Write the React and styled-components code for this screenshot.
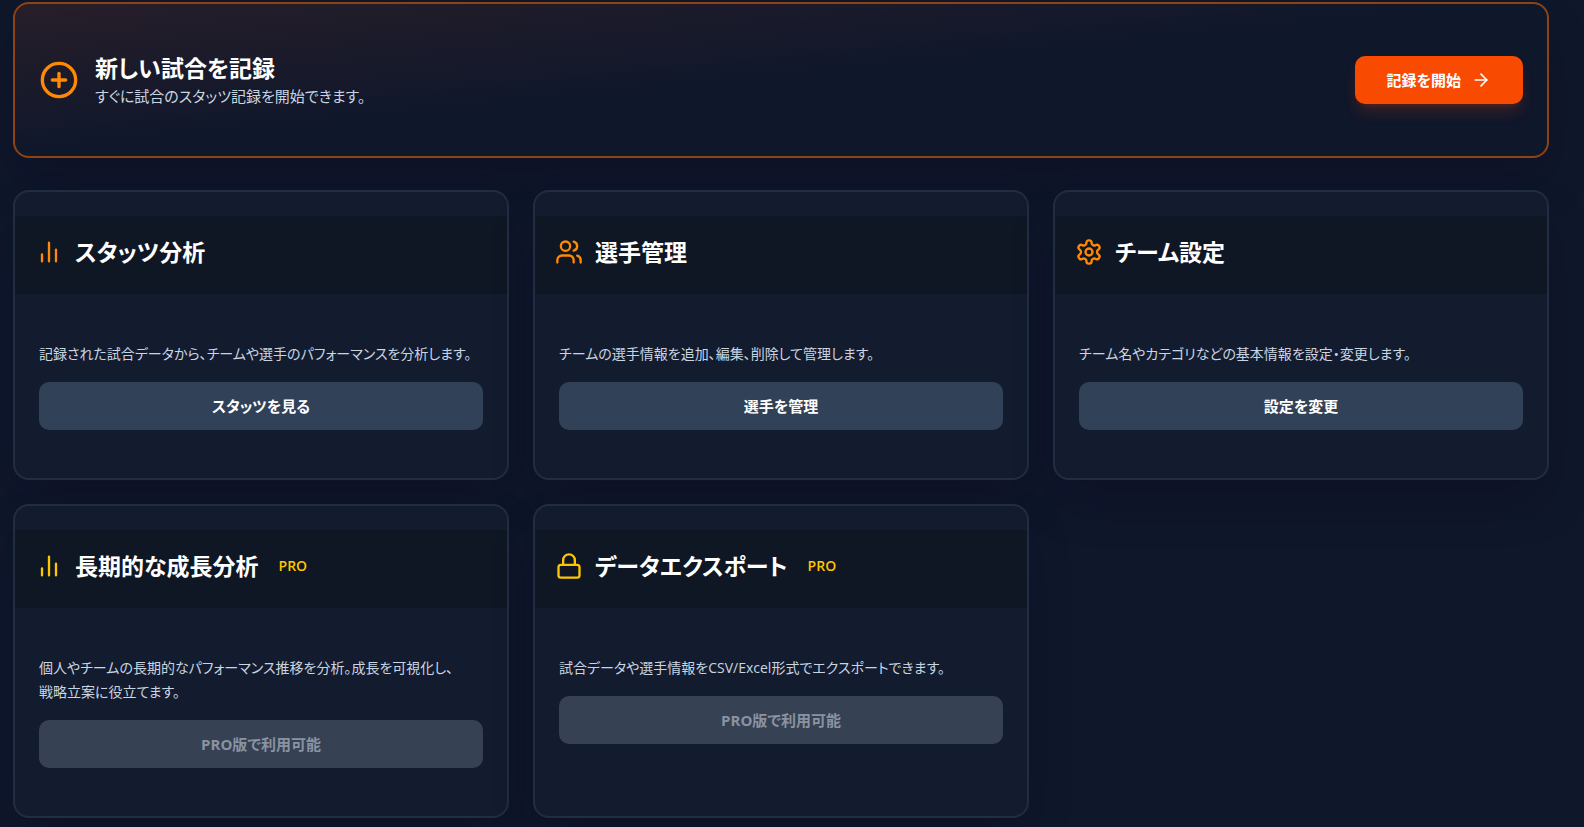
import React from "react";
import styled, { createGlobalStyle } from "styled-components";
import { ArrowRight, CirclePlus, Lock, Users } from "lucide-react";

const GlobalStyle = createGlobalStyle`
  *, *::before, *::after { box-sizing: border-box; }
  body {
    margin: 0;
    min-height: 100vh;
    background: #0f172b;
    color: #ffffff;
    font-family: "Open Sans", "Noto Sans CJK JP", sans-serif;
    font-size: 15px;
    line-height: 24px;
    font-feature-settings: "palt";
  }
  h2, p { margin: 0; }
`;

const Page = styled.main`
  display: flex;
  flex-direction: column;
  gap: 32px;
  padding: 2px 35px 9px 13px;
`;

const Panel = styled.section`
  border: 2px solid #212d40;
  border-radius: 16px;
  box-shadow: 0 25px 50px -12px rgba(13, 8, 30, 0.42);
`;

const Banner = styled(Panel)`
  display: flex;
  align-items: center;
  justify-content: space-between;
  gap: 24px;
  padding: 48px 24px;
  border-color: #8f4312;
  background: linear-gradient(to bottom right, #271e29, #0f172b 50%, #0f172b);
`;

const BannerLead = styled.div`
  display: flex;
  align-items: center;
  gap: 16px;
  color: #ff8904;
`;

const Title = styled.h2`
  color: #ffffff;
  font-size: 23px;
  font-weight: 700;
  line-height: 32px;
`;

const Text = styled.p`
  color: #cad5e2;
`;

const Description = styled(Text)`
  font-size: 14px;
  white-space: pre-line;
`;

const Button = styled.button`
  display: flex;
  align-items: center;
  justify-content: center;
  gap: 10px;
  height: 48px;
  padding: 0 32px;
  border: 0;
  border-radius: 10px;
  background: #314158;
  color: #ffffff;
  font: inherit;
  font-weight: 700;
  font-feature-settings: inherit;
  cursor: pointer;

  &:disabled {
    background: #364153;
    color: #8a93a2;
    cursor: not-allowed;
  }
`;

const StartButton = styled(Button)`
  flex: none;
  background: #f84a00;
  box-shadow: 0 10px 15px -3px rgba(245, 73, 0, 0.2),
    0 4px 6px -4px rgba(245, 73, 0, 0.2);
`;

const Grid = styled.div`
  display: grid;
  grid-template-columns: repeat(3, minmax(0, 1fr));
  gap: 24px;
`;

const Card = styled(Panel)`
  display: flex;
  flex-direction: column;
  gap: 24px;
  padding: 24px 0;
  background: #131c2e;
`;

const CardHeader = styled.header`
  display: flex;
  align-items: center;
  gap: 12px;
  padding: 20px 20px 26px;
  background: #0f1624;
  color: ${(p) => (p.$pro ? "#fdc700" : "#ff8904")};
`;

const ProBadge = styled.span`
  padding: 0 8px;
  font-size: 14px;
  font-weight: 600;
  line-height: 20px;
`;

const CardBody = styled.div`
  display: flex;
  flex-direction: column;
  gap: 16px;
  padding: 24px;
`;

const StrokeIcon = styled.svg.attrs({
  viewBox: "0 0 24 24",
  fill: "none",
  stroke: "currentColor",
  strokeWidth: 2,
  strokeLinecap: "round",
  strokeLinejoin: "round",
})`
  flex: none;
  width: 28px;
  height: 28px;
`;

function BarsIcon() {
  return (
    <StrokeIcon aria-hidden="true">
      <path d="M18 20V10M12 20V4M6 20v-6" />
    </StrokeIcon>
  );
}

function GearIcon() {
  return (
    <StrokeIcon aria-hidden="true">
      <path d="M12.22 2h-.44a2 2 0 0 0-2 2v.18a2 2 0 0 1-1 1.73l-.43.25a2 2 0 0 1-2 0l-.15-.08a2 2 0 0 0-2.73.73l-.22.38a2 2 0 0 0 .73 2.73l.15.1a2 2 0 0 1 1 1.72v.51a2 2 0 0 1-1 1.74l-.15.09a2 2 0 0 0-.73 2.73l.22.38a2 2 0 0 0 2.73.73l.15-.08a2 2 0 0 1 2 0l.43.25a2 2 0 0 1 1 1.73V20a2 2 0 0 0 2 2h.44a2 2 0 0 0 2-2v-.18a2 2 0 0 1 1-1.73l.43-.25a2 2 0 0 1 2 0l.15.08a2 2 0 0 0 2.73-.73l.22-.39a2 2 0 0 0-.73-2.73l-.15-.08a2 2 0 0 1-1-1.74v-.5a2 2 0 0 1 1-1.74l.15-.09a2 2 0 0 0 .73-2.73l-.22-.38a2 2 0 0 0-2.73-.73l-.15.08a2 2 0 0 1-2 0l-.43-.25a2 2 0 0 1-1-1.73V4a2 2 0 0 0-2-2z" />
      <circle cx="12" cy="12" r="3" />
    </StrokeIcon>
  );
}

const cards = [
  {
    icon: BarsIcon,
    title: "スタッツ分析",
    text: "記録された試合データから、チームや選手のパフォーマンスを分析します。",
    action: "スタッツを見る",
  },
  {
    icon: Users,
    title: "選手管理",
    text: "チームの選手情報を追加、編集、削除して管理します。",
    action: "選手を管理",
  },
  {
    icon: GearIcon,
    title: "チーム設定",
    text: "チーム名やカテゴリなどの基本情報を設定・変更します。",
    action: "設定を変更",
  },
  {
    icon: BarsIcon,
    title: "長期的な成長分析",
    text: "個人やチームの長期的なパフォーマンス推移を分析。成長を可視化し、\n戦略立案に役立てます。",
    action: "PRO版で利用可能",
    pro: true,
  },
  {
    icon: Lock,
    title: "データエクスポート",
    text: "試合データや選手情報をCSV/Excel形式でエクスポートできます。",
    action: "PRO版で利用可能",
    pro: true,
  },
];

function FeatureCard({ icon: Icon, title, text, action, pro }) {
  return (
    <Card>
      <CardHeader $pro={pro}>
        <Icon size={28} aria-hidden="true" />
        <Title>{title}</Title>
        {pro && <ProBadge>PRO</ProBadge>}
      </CardHeader>
      <CardBody>
        <Description>{text}</Description>
        <Button type="button" disabled={pro}>
          {action}
        </Button>
      </CardBody>
    </Card>
  );
}

export default function App() {
  return (
    <>
      <GlobalStyle />
      <Page lang="ja">
        <Banner>
          <BannerLead>
            <CirclePlus size={40} aria-hidden="true" />
            <div>
              <Title>新しい試合を記録</Title>
              <Text>すぐに試合のスタッツ記録を開始できます。</Text>
            </div>
          </BannerLead>
          <StartButton type="button">
            記録を開始
            <ArrowRight size={20} aria-hidden="true" />
          </StartButton>
        </Banner>
        <Grid>
          {cards.map((card) => (
            <FeatureCard key={card.title} {...card} />
          ))}
        </Grid>
      </Page>
    </>
  );
}
